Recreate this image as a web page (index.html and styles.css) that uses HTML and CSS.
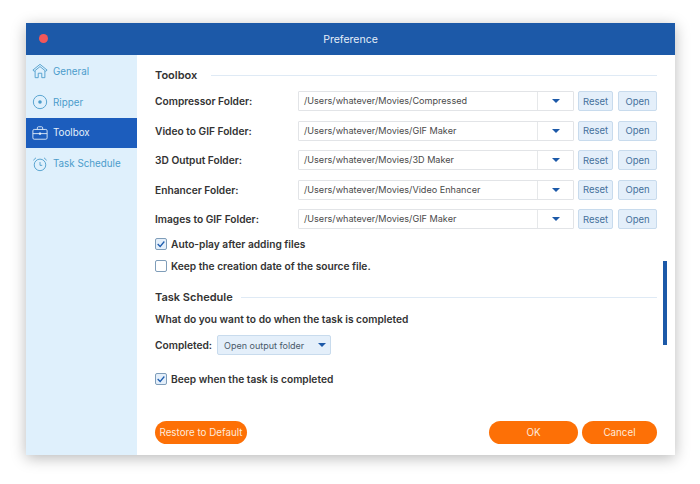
FILE: index.html
```html
<!DOCTYPE html>
<html lang="en">
<head>
<meta charset="utf-8">
<title>Preference</title>
<link rel="stylesheet" href="styles.css">
</head>
<body>
<div class="window">
  <header class="titlebar">
    <span class="close-dot"></span>
    <span class="title">Preference</span>
  </header>
  <div class="body">
    <nav class="sidebar">
      <a class="nav-item">
        <svg class="nav-icon" viewBox="0 0 18 18" fill="none" stroke="currentColor" stroke-width="1"><path d="M1 8 9 1.500 17 8l-1.500 1.300L9 4 2.500 9.300Z"/><path d="M3.500 9V16.500H7V11.500h4V16.500h3.500V9"/></svg>
        <span>General</span>
      </a>
      <a class="nav-item">
        <svg class="nav-icon" viewBox="0 0 18 18" fill="none" stroke="currentColor" stroke-width="1"><circle cx="9" cy="9" r="7.500"/><circle cx="9" cy="9" r="2" fill="currentColor" stroke="none"/></svg>
        <span>Ripper</span>
      </a>
      <a class="nav-item active">
        <svg class="nav-icon" viewBox="0 0 18 18" fill="none" stroke="currentColor" stroke-width="1"><rect x="1" y="5" width="16" height="11" rx="1.500"/><path d="M6 5V3.200C6 2.500 6.500 2 7.200 2h3.600c.7 0 1.200.5 1.200 1.200V5M1 9.700h16"/><rect x="7.800" y="8.500" width="2.400" height="2.400" fill="currentColor" stroke="none"/></svg>
        <span>Toolbox</span>
      </a>
      <a class="nav-item">
        <svg class="nav-icon" viewBox="0 0 18 18" fill="none" stroke="currentColor" stroke-width="1"><circle cx="9" cy="10" r="6.500"/><path d="M9 6.800V10.500H11.500M1.500 4.800 4.500 2M16.500 4.800 13.500 2"/></svg>
        <span>Task Schedule</span>
      </a>
    </nav>
    <main class="content">
      <div class="section-head first"><span>Toolbox</span><i class="rule"></i></div>
      <div class="rows">
        <div class="row">
          <label class="row-label">Compressor Folder:</label>
          <div class="path"><span class="path-text">/Users/whatever/Movies/Compressed</span><span class="path-arrow"><i class="caret"></i></span></div>
          <button class="mini">Reset</button><button class="mini">Open</button>
        </div>
        <div class="row">
          <label class="row-label">Video to GIF Folder:</label>
          <div class="path"><span class="path-text">/Users/whatever/Movies/GIF Maker</span><span class="path-arrow"><i class="caret"></i></span></div>
          <button class="mini">Reset</button><button class="mini">Open</button>
        </div>
        <div class="row">
          <label class="row-label">3D Output Folder:</label>
          <div class="path"><span class="path-text">/Users/whatever/Movies/3D Maker</span><span class="path-arrow"><i class="caret"></i></span></div>
          <button class="mini">Reset</button><button class="mini">Open</button>
        </div>
        <div class="row">
          <label class="row-label">Enhancer Folder:</label>
          <div class="path"><span class="path-text">/Users/whatever/Movies/Video Enhancer</span><span class="path-arrow"><i class="caret"></i></span></div>
          <button class="mini">Reset</button><button class="mini">Open</button>
        </div>
        <div class="row">
          <label class="row-label">Images to GIF Folder:</label>
          <div class="path"><span class="path-text">/Users/whatever/Movies/GIF Maker</span><span class="path-arrow"><i class="caret"></i></span></div>
          <button class="mini">Reset</button><button class="mini">Open</button>
        </div>
      </div>
      <div class="check check-auto"><span class="box"><svg viewBox="0 0 12 12" fill="none" stroke="#1c5cae" stroke-width="1.500"><path d="M2 6 5 9 10 3"/></svg></span>Auto-play after adding files</div>
      <div class="check check-keep"><span class="box"></span>Keep the creation date of the source file.</div>
      <div class="section-head second"><span>Task Schedule</span><i class="rule"></i></div>
      <p class="question">What do you want to do when the task is completed</p>
      <div class="completed">
        <span class="completed-label">Completed:</span>
        <div class="select"><span>Open output folder</span><i class="caret"></i></div>
      </div>
      <div class="check check-beep"><span class="box"><svg viewBox="0 0 12 12" fill="none" stroke="#1c5cae" stroke-width="1.500"><path d="M2 6 5 9 10 3"/></svg></span>Beep when the task is completed</div>
      <div class="actions">
        <button class="pill restore">Restore to Default</button>
        <button class="pill ok">OK</button>
        <button class="pill cancel">Cancel</button>
      </div>
      <div class="scrollbar"></div>
    </main>
  </div>
</div>
</body>
</html>
```

FILE: styles.css
```css
* { box-sizing: border-box; }
html, body { margin: 0; padding: 0; }
body {
  width: 700px;
  height: 484px;
  overflow: hidden;
  background: #fff;
  padding: 23px 25px 0 26px;
  font-family: Inter, "Liberation Sans", sans-serif;
  color: #333;
}
.window {
  width: 649px;
  height: 432px;
  display: flex;
  flex-direction: column;
  background: #fff;
  box-shadow: 0 3px 14px rgba(0, 0, 0, 0.28);
}
.titlebar {
  height: 32px;
  flex: none;
  background: #1c59a8;
  display: flex;
  align-items: center;
  justify-content: center;
  position: relative;
}
.close-dot {
  position: absolute;
  left: 13px;
  top: 11px;
  width: 9px;
  height: 9px;
  border-radius: 50%;
  background: #f2575a;
}
.title { color: #e6eef8; font-size: 10.500px; }
.body { flex: 1; display: flex; min-height: 0; }
.sidebar {
  width: 111px;
  flex: none;
  background: #dff0fc;
  display: flex;
  flex-direction: column;
  padding-top: 1px;
}
.nav-item {
  height: 30.800px;
  display: flex;
  align-items: center;
  gap: 5px;
  padding-left: 6px;
  font-size: 9.800px;
  color: #4b9ccb;
}
.nav-item.active { background: #1c5dbd; color: #e4effa; }
.nav-icon { width: 16px; height: 16px; flex: none; }
.content {
  flex: 1;
  position: relative;
  padding: 0 18px 0 18px;
  min-width: 0;
}
.section-head {
  display: flex;
  align-items: center;
  font-size: 11px;
  font-weight: 600;
  color: #333;
  height: 14px;
}
.section-head.first { margin-top: 13px; gap: 14px; }
.section-head.second { margin-top: 17px; gap: 8px; }
.rule { flex: 1; height: 1px; background: #dfeaf5; }
.rows {
  margin-top: 9px;
  display: flex;
  flex-direction: column;
  gap: 9.500px;
}
.row { display: flex; align-items: center; height: 20px; }
.row-label {
  width: 143px;
  flex: none;
  font-size: 10.200px;
  font-weight: 600;
}
.path {
  width: 276px;
  height: 20px;
  flex: none;
  display: flex;
  align-items: center;
  border: 1px solid #e2e4e7;
  border-radius: 1px;
  background: #fff;
}
.path-text {
  flex: 1;
  padding-left: 5px;
  font-size: 9.100px;
  color: #4a4a4a;
  height: 100%;
  line-height: 18px;
  border-right: 1px solid #e6e8ea;
}
.path-arrow { width: 35px; flex: none; display: flex; justify-content: center; }
.caret {
  width: 0;
  height: 0;
  border-left: 4px solid transparent;
  border-right: 4px solid transparent;
  border-top: 4.500px solid #1c59a8;
}
.mini {
  flex: none;
  height: 20px;
  margin: 0;
  padding: 0;
  font-family: inherit;
  font-size: 9.500px;
  color: #45719c;
  background: #e4effa;
  border: 1px solid #c8dbed;
  border-radius: 2px;
}
.path + .mini { width: 35px; margin-left: 4px; }
.mini + .mini { width: 39px; margin-left: 5px; }
.check {
  display: flex;
  align-items: center;
  gap: 4px;
  height: 14px;
  font-size: 10.200px;
  font-weight: 600;
}
.check-auto { margin-top: 8px; }
.check-keep { margin-top: 8px; }
.check-beep { margin-top: 17px; }
.box {
  width: 12px;
  height: 12px;
  flex: none;
  border: 1px solid #7f9db9;
  border-radius: 2px;
  background: #fff;
  display: flex;
}
.box svg { width: 100%; height: 100%; }
.check-auto .box, .check-beep .box { background: #e4effa; }
.question {
  margin: 8px 0 0;
  font-size: 10.200px;
  font-weight: 600;
  line-height: 14px;
}
.completed {
  margin-top: 9px;
  display: flex;
  align-items: center;
  gap: 1px;
  height: 20px;
}
.completed-label { width: 61px; flex: none; font-size: 10.200px; font-weight: 600; }
.select {
  width: 114px;
  height: 20px;
  display: flex;
  align-items: center;
  justify-content: space-between;
  padding: 0 4px 0 6px;
  font-size: 9px;
  color: #4a5a6a;
  background: #e4effa;
  border: 1px solid #c8dbed;
  border-radius: 2px;
}
.actions {
  margin-top: 35px;
  display: flex;
  align-items: center;
}
.pill {
  height: 23px;
  margin: 0;
  padding: 0;
  border: 0;
  border-radius: 12px;
  background: #fd7006;
  color: #fdeadb;
  font-family: inherit;
  font-size: 9.800px;
}
.restore { width: 92px; }
.ok { width: 89px; margin-left: auto; }
.cancel { width: 75px; margin-left: 4px; }
.scrollbar {
  position: absolute;
  left: 526px;
  top: 206px;
  width: 4px;
  height: 84px;
  background: #1c59a8;
}
```
